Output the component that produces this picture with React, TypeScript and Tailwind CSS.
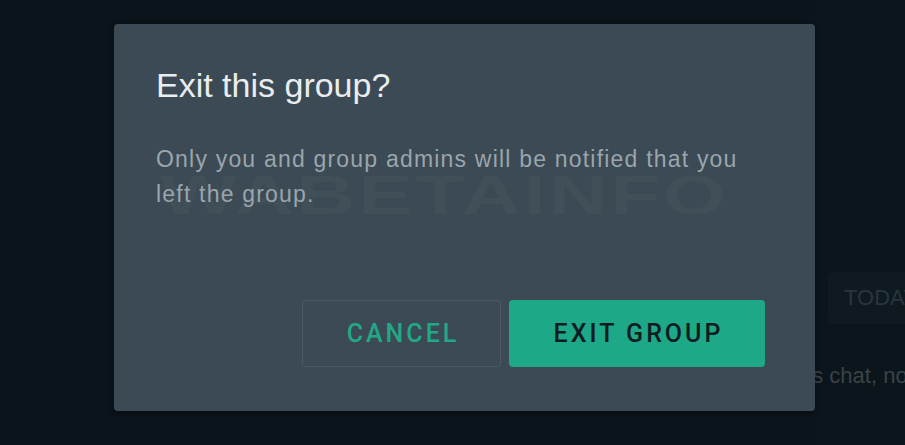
export default function App() {
  return (
    <div className="relative w-[905px] h-[445px] overflow-hidden bg-[#0b141a] font-['Liberation_Sans','Helvetica',sans-serif]">
      {/* chat behind the modal */}
      <div className="flex h-full">
        <div className="w-[815px] shrink-0" />
        <div className="flex flex-1 flex-col bg-[#0b151c] pt-[272px]">
          <div className="ml-[13px] h-[52px] whitespace-nowrap rounded-l-[6px] bg-[#0e1920] pl-[16px] text-[22px] leading-[52px] text-[#2a353c]">
            TODAY
          </div>
          <div className="-ml-[26px] mt-[37px] whitespace-nowrap text-[22px] leading-[30px] text-[#3b4246]">
            this chat, not even WhatsApp
          </div>
        </div>
      </div>

      {/* modal */}
      <div className="absolute left-[114px] top-[24px] flex h-[387px] w-[701px] flex-col rounded-[4px] bg-[#3b4a54] pb-[44px] pl-[42px] pr-[50px] pt-[41px] shadow-[0_2px_6px_rgba(0,0,0,0.3)]">
        <div className="pointer-events-none absolute left-[46px] top-[143px] origin-left scale-x-[1.45] select-none whitespace-nowrap text-[56px] font-bold leading-[56px] tracking-[2px] text-[#414f59]">
          WABETAINFO
        </div>
        <h2 className="relative text-[34px] leading-[40px] text-[#e9edef]">Exit this group?</h2>
        <p className="relative mt-[37px] max-w-[600px] text-[23px] leading-[35px] tracking-[1.2px] text-[#9aa5ac]">
          Only you and group admins will be notified that you left the group.
        </p>
        <div className="mt-auto flex justify-end gap-[8px] font-['Roboto',sans-serif] text-[25px] font-medium tracking-[3px]">
          <button className="h-[67px] w-[199px] rounded-[3px] border border-[#4a5962] pl-[3px] text-[#22a887]">
            CANCEL
          </button>
          <button className="h-[67px] w-[256px] rounded-[4px] bg-[#1da887] pl-[3px] text-[#0f1c21]">
            EXIT GROUP
          </button>
        </div>
      </div>
    </div>
  );
}
